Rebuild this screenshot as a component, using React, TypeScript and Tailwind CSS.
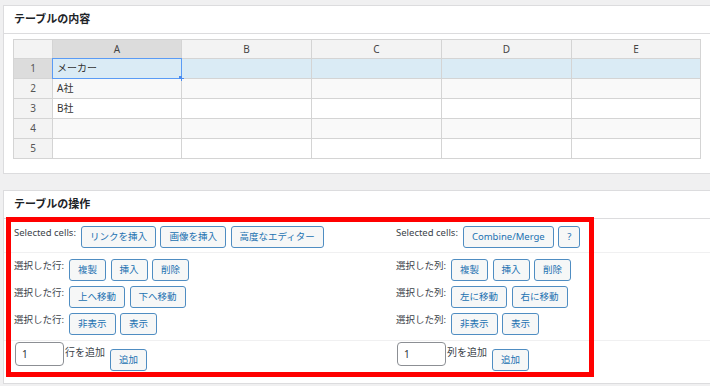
import type { ReactNode } from "react";

const font = "font-['Noto_Sans','Noto_Sans_CJK_JP',sans-serif]";

function Btn({ children }: { children: ReactNode }) {
  return (
    <button
      type="button"
      className="h-[22px] shrink-0 rounded-[3px] border border-[#4f8dc2] bg-[#f6f7f7] px-2 text-[9.5px] leading-none text-[#2271b1]"
    >
      {children}
    </button>
  );
}

function Line({ label, buttons }: { label: string; buttons: string[] }) {
  return (
    <div className="flex items-start">
      <span className="mr-[5px] text-[9.5px] leading-[13px] text-[#3c434a]">{label}</span>
      <div className="flex gap-[4.5px]">
        {buttons.map((b) => (
          <Btn key={b}>{b}</Btn>
        ))}
      </div>
    </div>
  );
}

function AddLine({ text }: { text: string }) {
  return (
    <div className="flex items-start">
      <div className="flex h-[24px] w-[49px] items-center rounded-[4px] border border-[#8c8f94] bg-white pl-[6px] text-[10px] text-[#2c3338]">
        1
      </div>
      <span className="ml-px mr-[5px] mt-[4px] text-[10px] leading-[13px] text-[#3c434a]">{text}</span>
      <div className="mt-[3px]">
        <Btn>追加</Btn>
      </div>
    </div>
  );
}

const cols = ["A", "B", "C", "D", "E"];
const rows = [
  { n: "1", a: "メーカー" },
  { n: "2", a: "A社" },
  { n: "3", a: "B社" },
  { n: "4", a: "" },
  { n: "5", a: "" },
];

function Sheet() {
  return (
    <table className="w-[688px] table-fixed border-collapse text-[10px] text-[#333]">
      <colgroup>
        <col className="w-[39px]" />
        <col className="w-[129px]" />
        <col className="w-[130px]" />
        <col className="w-[130px]" />
        <col className="w-[130px]" />
        <col className="w-[129px]" />
      </colgroup>
      <thead>
        <tr className="h-[19px]">
          <th className="border border-[#d4d4d4] bg-[#f3f3f3]" />
          {cols.map((c) => (
            <th
              key={c}
              className={`border border-[#d4d4d4] text-center font-normal text-[#444] ${
                c === "A" ? "bg-[#dcdcdc]" : "bg-[#f3f3f3]"
              }`}
            >
              {c}
            </th>
          ))}
        </tr>
      </thead>
      <tbody>
        {rows.map((r, i) => {
          const sel = i === 0;
          const bg = sel ? "bg-[#daebf5]" : i % 2 === 1 ? "bg-[#f9f9f9]" : "bg-white";
          return (
            <tr key={r.n} className="h-[20px]">
              <td
                className={`border border-[#d4d4d4] text-center text-[#555] ${
                  sel ? "bg-[#dcdcdc]" : "bg-[#f3f3f3]"
                }`}
              >
                {r.n}
              </td>
              {cols.map((c) => (
                <td key={c} className={`relative border border-[#d4d4d4] px-[4px] ${bg}`}>
                  {c === "A" ? r.a : ""}
                  {sel && c === "A" && (
                    <>
                      <div className="absolute -inset-px border border-[#5a9bf5]" />
                      <div className="absolute -bottom-[3px] -right-[3px] h-[5px] w-[5px] bg-[#4a8cf0]" />
                    </>
                  )}
                </td>
              ))}
            </tr>
          );
        })}
      </tbody>
    </table>
  );
}

function PanelHead({ title }: { title: string }) {
  return (
    <div className="flex h-[28px] items-center border-b border-[#dcdcde] px-[10px] text-[11px] font-semibold text-[#1d2327]">
      {title}
    </div>
  );
}

export default function App() {
  return (
    <div className={`relative h-[386px] w-[710px] overflow-hidden bg-[#f0f0f1] pl-[3px] pt-[5px] ${font}`}>
      <div className="h-[169px] w-[720px] border border-[#dcdcde] bg-white">
        <PanelHead title="テーブルの内容" />
        <div className="pl-[9px] pt-[5px]">
          <Sheet />
        </div>
      </div>

      <div className="mt-[16px] h-[194px] w-[720px] border border-[#dcdcde] bg-white">
        <PanelHead title="テーブルの操作" />
        <div className="grid grid-cols-[382px_1fr] border-b border-[#f0f0f1] pb-[4px] pl-[10px] pt-[7px]">
          <Line label="Selected cells:" buttons={["リンクを挿入", "画像を挿入", "高度なエディター"]} />
          <Line label="Selected cells:" buttons={["Combine/Merge", "?"]} />
        </div>
        <div className="grid grid-cols-[382px_1fr] border-b border-[#f0f0f1] pb-[5px] pl-[10px] pt-[6px]">
          <div className="flex flex-col gap-[5px]">
            <Line label="選択した行:" buttons={["複製", "挿入", "削除"]} />
            <Line label="選択した行:" buttons={["上へ移動", "下へ移動"]} />
            <Line label="選択した行:" buttons={["非表示", "表示"]} />
          </div>
          <div className="flex flex-col gap-[5px]">
            <Line label="選択した列:" buttons={["複製", "挿入", "削除"]} />
            <Line label="選択した列:" buttons={["左に移動", "右に移動"]} />
            <Line label="選択した列:" buttons={["非表示", "表示"]} />
          </div>
        </div>
        <div className="grid grid-cols-[382px_1fr] pl-[11px] pt-px">
          <AddLine text="行を追加" />
          <AddLine text="列を追加" />
        </div>
      </div>

      {/* annotation frame drawn over the operations block */}
      <div className="pointer-events-none absolute left-[6px] top-[217px] h-[160px] w-[588px] border-[5px] border-[#ff0000]" />
    </div>
  );
}
